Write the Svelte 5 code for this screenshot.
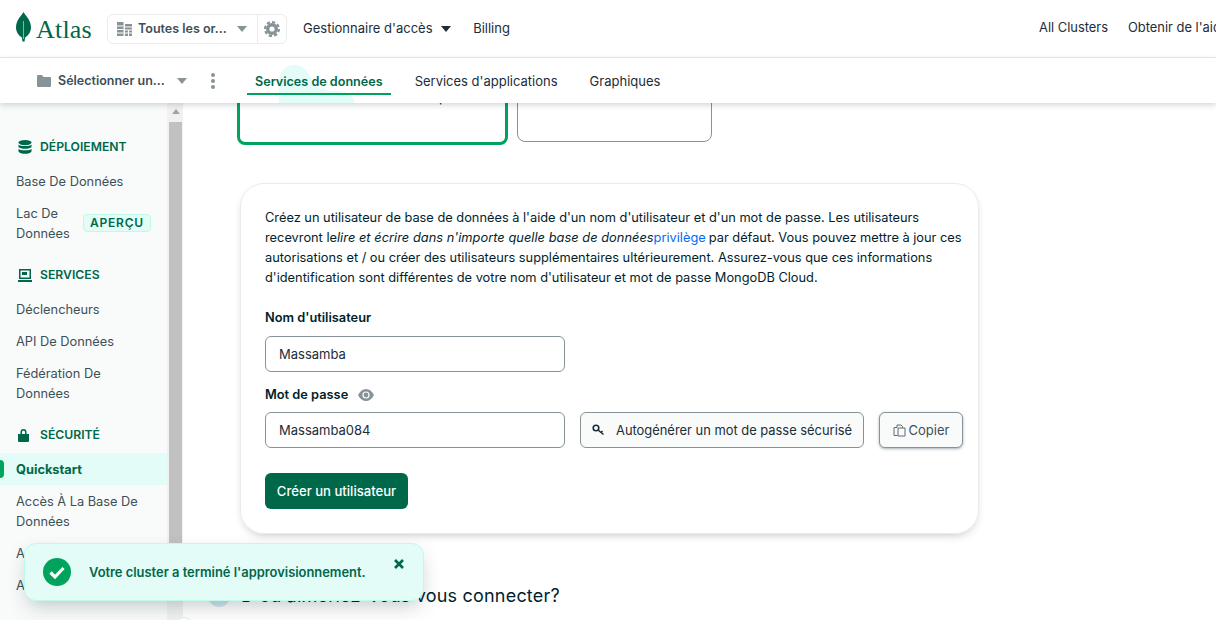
<script>
	let sections = [
		{ title: 'Déploiement', icon: 'db', items: ['Base De Données', 'Lac De Données'] },
		{ title: 'Services', icon: 'laptop', items: ['Déclencheurs', 'API De Données', 'Fédération De Données'] },
		{ title: 'Sécurité', icon: 'lock', items: ['Quickstart', 'Accès À La Base De Données', 'Accès Au Réseau', 'Avancé'] }
	];
</script>

<div class="page">
	<header class="topbar">
		<div class="top-left">
			<a class="logo" href="#top">
				<svg width="15" height="30" viewBox="0 0 15 30">
					<path d="M7.5 0C9 3 15 8 15 15.5C15 20 12 24 9 25.5L8.6 29.5H6.4L6 25.5C3 24 0 20 0 15.5C0 8 6 3 7.5 0Z" fill="#00684a" />
					<path d="M7.5 9V27" stroke="#8cc4ad" stroke-width="0.9" />
				</svg>
				<span>Atlas</span>
			</a>
			<div class="org">
				<div class="org-main">
					<svg width="15" height="14" viewBox="0 0 15 14" fill="#889397">
						<path d="M0 0H6.5V14H0ZM8 2H15V14H8Z" />
						<path d="M0 4H6.5M0 7.5H6.5M0 11H6.5M8 5H15M8 8H15M8 11H15M11.5 8V14" stroke="#fff" stroke-width="1" />
					</svg>
					<b>Toutes les or...</b>
					<i class="caret grey"></i>
				</div>
				<div class="org-gear">
					<svg width="16" height="16" viewBox="0 0 16 16" fill="none" stroke="#889397">
						<circle cx="8" cy="8" r="4.3" stroke-width="3.4" />
						<circle cx="8" cy="8" r="6.9" stroke-width="2.2" stroke-dasharray="3.2 2.2" />
					</svg>
				</div>
			</div>
			<nav class="top-links">
				<span>Gestionnaire d'accès <i class="caret dark"></i></span>
				<span>Billing</span>
			</nav>
		</div>
		<div class="top-right">
			<span>All Clusters</span>
			<span>Obtenir de l'aide</span>
		</div>
	</header>

	<div class="subbar">
		<div class="project">
			<svg width="14" height="12" viewBox="0 0 14 12" fill="#889397"><path d="M0 1a1 1 0 0 1 1-1h4l1.5 2H13a1 1 0 0 1 1 1v8a1 1 0 0 1-1 1H1a1 1 0 0 1-1-1Z" /></svg>
			<b>Sélectionner un...</b>
			<i class="caret grey"></i>
			<span class="kebab"><i></i><i></i><i></i></span>
		</div>
		<nav class="tabs">
			<svg class="blob" width="76" height="38" viewBox="0 0 76 38"><path d="M0 38V16C0 6 7 0 16 0C26 0 30 9 35 18C38 25 44 25 55 26C68 26 74 30 76 38Z" fill="#e3fcf7" /></svg>
			<span class="tab active">Services de données</span>
			<span class="tab">Services d'applications</span>
			<span class="tab">Graphiques</span>
		</nav>
	</div>

	<div class="body">
		<aside class="side">
			{#each sections as s}
				<div class="side-head">
					<span class="side-icon">
						{#if s.icon === 'db'}
							<svg width="14" height="14" viewBox="0 0 14 14" fill="#00684a">
								<ellipse cx="7" cy="2.6" rx="6.5" ry="2.6" />
								<path d="M.5 4.4C2 6.4 12 6.4 13.5 4.4V7C12 9.4 2 9.4 .5 7ZM.5 8.8C2 10.8 12 10.8 13.5 8.8V11.4C12 14.6 2 14.6 .5 11.4Z" />
							</svg>
						{:else if s.icon === 'laptop'}
							<svg width="14" height="13" viewBox="0 0 14 13" fill="#00684a">
								<path d="M1 0H13V10H1ZM2.5 1.5V8.5H11.5V1.5ZM0 11H14V13H0Z" fill-rule="evenodd" />
								<path d="M4 3H9V6H4Z" />
							</svg>
						{:else}
							<svg width="11" height="14" viewBox="0 0 11 14" fill="#00684a">
								<path d="M2.5 6V4a3 3 0 0 1 6 0V6H11V13a1 1 0 0 1-1 1H1a1 1 0 0 1-1-1V6ZM4 6H7V4a1.5 1.5 0 0 0-3 0Z" fill-rule="evenodd" />
							</svg>
						{/if}
					</span>
					<span>{s.title}</span>
				</div>
				{#each s.items as item}
					<div class="side-item" class:current={item === 'Quickstart'}>
						<span>{item}</span>
						{#if item === 'Lac De Données'}
							<em class="badge">APERÇU</em>
						{/if}
					</div>
				{/each}
			{/each}
		</aside>

		<div class="scrolltrack">
			<div class="arrow"></div>
			<div class="thumb"></div>
		</div>

		<main class="main">
			<div class="choices">
				<div class="choice selected">Nom d'utilisateur et mot de passe</div>
				<div class="choice"></div>
			</div>

			<section class="card">
				<p>
					Créez un utilisateur de base de données à l'aide d'un nom d'utilisateur et d'un mot de passe. Les utilisateurs<br />
					recevront le<em>lire et écrire dans n'importe quelle base de données</em><a href="#top">privilège</a>par défaut. Vous pouvez mettre à jour ces<br />
					autorisations et / ou créer des utilisateurs supplémentaires ultérieurement. Assurez-vous que ces informations<br />
					d'identification sont différentes de votre nom d'utilisateur et mot de passe MongoDB Cloud.
				</p>
				<label class="field-label" for="user">Nom d'utilisateur</label>
				<input id="user" class="input" value="Massamba" />
				<label class="field-label second" for="pass">
					Mot de passe
					<svg width="16" height="12" viewBox="0 0 16 12">
						<path d="M0 6C2 2 5 0 8 0S14 2 16 6C14 10 11 12 8 12S2 10 0 6Z" fill="#889397" />
						<circle cx="8" cy="6" r="3.6" fill="#fff" />
						<circle cx="8" cy="6" r="2.4" fill="#889397" />
					</svg>
				</label>
				<div class="pass-row">
					<input id="pass" class="input" value="Massamba084" />
					<button class="btn auto">
						<svg width="13" height="12" viewBox="0 0 13 12" fill="none" stroke="#1c2d38" stroke-width="1.6">
							<circle cx="4" cy="4" r="2.8" />
							<path d="M6 6L11.5 10.5M9 8.5L10.5 7" />
						</svg>
						Autogénérer un mot de passe sécurisé
					</button>
					<button class="btn copy">
						<svg width="13" height="13" viewBox="0 0 13 13" fill="none" stroke="#5c6c75" stroke-width="1">
							<path d="M4.5 11.5H1V3.5H4M4 3.5V1H8L9.5 2.5V4M5 4H12V12H5Z" />
						</svg>
						Copier
					</button>
				</div>
				<button class="create">Créer un utilisateur</button>
			</section>

			<div class="next-step">
				<span class="dot"></span>
				<span>D'où aimeriez-vous vous connecter?</span>
			</div>
		</main>
	</div>

	<div class="toast">
		<svg width="28" height="28" viewBox="0 0 28 28">
			<circle cx="14" cy="14" r="14" fill="#00a35c" />
			<path d="M7.5 14.5L12 19L20.5 10" fill="none" stroke="#fff" stroke-width="3.2" />
		</svg>
		<strong>Votre cluster a terminé l'approvisionnement.</strong>
		<svg class="close" width="10" height="10" viewBox="0 0 10 10">
			<path d="M1 1L9 9M9 1L1 9" stroke="#00684a" stroke-width="2.6" />
		</svg>
	</div>
	<div class="next-dot"></div>
</div>

<style>
	:global(body) {
		margin: 0;
		overflow: hidden;
		background: #fff;
	}

	.page {
		position: relative;
		width: 1216px;
		height: 620px;
		overflow: hidden;
		font-family: Inter, 'Liberation Sans', sans-serif;
		font-size: 13px;
		color: #1c2d38;
		display: flex;
		flex-direction: column;
	}

	.topbar {
		height: 57px;
		flex: none;
		display: flex;
		border-bottom: 1px solid #e8edeb;
		align-items: center;
	}

	.top-left {
		width: 1039px;
		flex: none;
		display: flex;
		align-items: center;
		padding-left: 16px;
		box-sizing: border-box;
	}

	.logo {
		display: flex;
		align-items: center;
		gap: 6px;
		width: 91px;
		color: #00684a;
		text-decoration: none;
		font-family: 'Liberation Serif', serif;
		font-size: 26px;
		letter-spacing: 0.2px;
	}

	.logo svg {
		margin: -4px 0 0;
	}

	.logo span {
		margin: 3px 0 0 -1px;
	}

	.org {
		display: flex;
		height: 30px;
		width: 180px;
		box-sizing: border-box;
		border: 1px solid #e8edeb;
		border-radius: 6px;
	}

	.org-main {
		flex: 1;
		display: flex;
		align-items: center;
		padding: 0 10px 0 9px;
		gap: 6px;
		border-right: 1px solid #e8edeb;
	}

	.org-main b {
		flex: 1;
		font-size: 12.5px;
		font-weight: 600;
		color: #3d4f58;
		white-space: nowrap;
	}

	.org-gear {
		width: 28px;
		display: flex;
		align-items: center;
		justify-content: center;
	}

	.caret {
		display: inline-block;
		width: 0;
		height: 0;
		border-left: 5px solid transparent;
		border-right: 5px solid transparent;
		border-top: 6px solid #889397;
	}

	.caret.dark {
		border-top-color: #1c2d38;
		margin-left: 5px;
		vertical-align: 1px;
	}

	.top-links {
		display: flex;
		gap: 22px;
		margin: 0 0 2px 16px;
		white-space: nowrap;
	}

	.top-right {
		flex: none;
		display: flex;
		gap: 20px;
		font-size: 12.9px;
		margin-bottom: 2px;
		white-space: nowrap;
	}

	.subbar {
		height: 45px;
		flex: none;
		position: relative;
		z-index: 2;
		display: flex;
		align-items: center;
		background: #fff;
		box-shadow: 0 2px 6px rgba(0, 30, 43, 0.18);
	}

	.project {
		width: 247px;
		flex: none;
		box-sizing: border-box;
		padding-left: 37px;
		display: flex;
		align-items: center;
		gap: 7px;
	}

	.project b {
		font-size: 12.5px;
		font-weight: 600;
		color: #3d4f58;
		white-space: nowrap;
		width: 112px;
	}

	.kebab {
		display: flex;
		flex-direction: column;
		gap: 2px;
		margin-left: 17px;
	}

	.kebab i {
		width: 4px;
		height: 4px;
		border-radius: 50%;
		background: #889397;
	}

	.tabs {
		position: relative;
		display: flex;
		align-self: stretch;
		gap: 16px;
		font-size: 13px;
	}

	.blob {
		position: absolute;
		left: 32px;
		top: 7px;
	}

	.tab {
		position: relative;
		padding: 0 8px;
		line-height: 47px;
		height: 37px;
		white-space: nowrap;
	}

	.tab.active {
		font-size: 12.6px;
		font-weight: 600;
		color: #00684a;
		border-bottom: 2px solid #00a35c;
		height: 35px;
	}

	.body {
		flex: 1;
		display: flex;
		min-height: 0;
	}

	.side {
		width: 167px;
		flex: none;
		background: #f9fbfa;
		padding-top: 18px;
		box-sizing: border-box;
		font-size: 12.8px;
	}

	.side-head {
		height: 44px;
		box-sizing: border-box;
		padding: 18px 0 10px 18px;
		line-height: 16px;
		display: flex;
		align-items: center;
		gap: 8px;
		font-weight: 600;
		font-size: 12.2px;
		text-transform: uppercase;
		color: #00684a;
	}

	.side-icon {
		width: 14px;
		display: flex;
	}

	.side-item {
		display: flex;
		align-items: center;
		padding: 7px 16px 5px 16px;
		line-height: 20px;
		position: relative;
		color: #3d4f58;
	}

	.side-item.current {
		background: #e3fcf7;
		font-weight: 700;
		color: #00684a;
	}

	.side-item.current::before {
		content: '';
		position: absolute;
		left: 0;
		top: 7px;
		width: 4px;
		height: 18px;
		border-radius: 0 4px 4px 0;
		background: #00a35c;
	}

	.badge {
		font-style: normal;
		font-weight: 600;
		font-size: 12px;
		letter-spacing: 0.8px;
		line-height: 16px;
		padding: 0 6px;
		color: #00684a;
		background: #e3fcf7;
		border: 1px solid #c0fae6;
		border-radius: 4px;
		flex: none;
		margin: -3px 0 0 auto;
	}

	.scrolltrack {
		width: 16px;
		flex: none;
		background: #f1f1f1;
		padding-left: 2px;
		box-sizing: border-box;
	}

	.arrow {
		width: 0;
		height: 0;
		margin: 6px 0 8px 3px;
		border-left: 4px solid transparent;
		border-right: 4px solid transparent;
		border-bottom: 5px solid #a3a3a3;
	}

	.thumb {
		width: 13px;
		height: 450px;
		background: #c1c1c1;
	}

	.main {
		flex: 1;
		min-width: 0;
		overflow: hidden;
	}

	.choices {
		display: flex;
		align-items: flex-start;
		gap: 9px;
		margin: -58px 0 0 54px;
	}

	.choice {
		width: 195px;
		height: 97px;
		box-sizing: border-box;
		border: 1px solid #889397;
		border-radius: 8px;
	}

	.choice.selected {
		width: 271px;
		height: 100px;
		border: 3px solid #00a35c;
		padding: 41px 0 0 0;
		text-align: center;
		line-height: 16px;
		color: #001e2b;
	}

	.card {
		width: 739px;
		height: 351px;
		box-sizing: border-box;
		margin: 38px 0 0 57px;
		padding: 24px 24px 24px 24px;
		border: 1px solid #e8edeb;
		border-radius: 24px;
		box-shadow: 0 4px 10px -4px rgba(0, 30, 43, 0.3);
	}

	.card p {
		margin: 0;
		line-height: 20px;
		font-size: 12.8px;
		white-space: nowrap;
		color: #001e2b;
	}

	.card em {
		letter-spacing: 0.04px;
	}

	.card a {
		color: #016bf8;
		text-decoration: none;
		margin-right: 3px;
	}

	.field-label {
		display: flex;
		align-items: center;
		gap: 10px;
		margin-top: 20px;
		line-height: 20px;
		font-weight: 600;
		font-size: 12.8px;
		color: #001e2b;
	}

	.field-label.second {
		margin-top: 13px;
	}

	.input {
		display: block;
		flex: none;
		width: 300px;
		height: 36px;
		box-sizing: border-box;
		margin-top: 8px;
		padding: 0 13px;
		border: 1px solid #889397;
		border-radius: 6px;
		font: inherit;
		color: #1c2d38;
		outline: none;
	}

	.pass-row {
		display: flex;
		gap: 15px;
		align-items: flex-start;
		margin-top: 7px;
	}

	.pass-row .input {
		margin-top: 0;
	}

	.btn {
		height: 36px;
		flex: none;
		box-sizing: border-box;
		display: flex;
		align-items: center;
		border: 1px solid #889397;
		border-radius: 6px;
		background: #f9fbfa;
		font: inherit;
		color: #1c2d38;
		white-space: nowrap;
		padding: 0;
	}

	.auto {
		width: 284px;
		padding-left: 11px;
		gap: 11px;
		font-size: 12.9px;
	}

	.copy {
		width: 84px;
		justify-content: center;
		gap: 3px;
		color: #3d4f58;
		box-shadow: 0 1px 3px rgba(0, 30, 43, 0.35);
	}

	.create {
		display: block;
		width: 143px;
		height: 36px;
		margin-top: 25px;
		padding: 0;
		border: none;
		border-radius: 6px;
		background: #00684a;
		color: #fff;
		font: inherit;
		font-size: 13.1px;
		font-weight: 500;
	}

	.next-step {
		display: flex;
		align-items: center;
		gap: 11px;
		margin: 51px 0 0 25px;
		font-size: 18px;
		letter-spacing: 0.2px;
		line-height: 22px;
		white-space: nowrap;
		color: #001e2b;
	}

	.dot {
		width: 22px;
		height: 22px;
		flex: none;
		border-radius: 50%;
		background: #d5e6ee;
	}

	.toast {
		position: absolute;
		left: 24px;
		top: 543px;
		z-index: 3;
		width: 400px;
		height: 58px;
		box-sizing: border-box;
		display: flex;
		align-items: center;
		gap: 18px;
		padding-left: 18px;
		background: #e3fcf7;
		border: 1px solid #c0fae6;
		border-radius: 12px;
		box-shadow: 0 8px 20px -4px rgba(0, 30, 43, 0.25);
	}

	.toast strong {
		font-weight: 600;
		font-size: 12.9px;
		color: #00684a;
		white-space: nowrap;
	}

	.close {
		position: absolute;
		right: 19px;
		top: 15px;
	}

	.next-dot {
		position: absolute;
		left: 175px;
		top: 617px;
		width: 18px;
		height: 18px;
		box-sizing: border-box;
		border: 1px solid #e8edeb;
		border-radius: 50%;
		background: #fff;
	}
</style>
